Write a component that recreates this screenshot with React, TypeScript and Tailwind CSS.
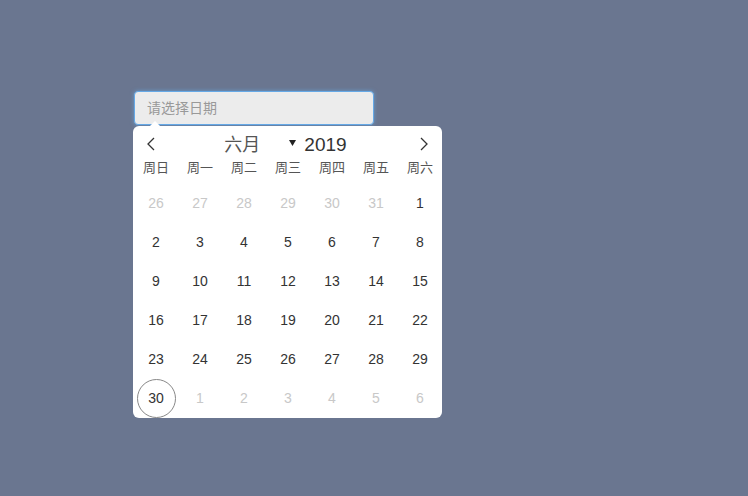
const weekdays = ["周日", "周一", "周二", "周三", "周四", "周五", "周六"];

type Day = { n: number; muted?: boolean; selected?: boolean };

const days: Day[] = [
  ...[26, 27, 28, 29, 30, 31].map((n) => ({ n, muted: true })),
  ...Array.from({ length: 29 }, (_, i) => ({ n: i + 1 })),
  { n: 30, selected: true },
  ...[1, 2, 3, 4, 5, 6].map((n) => ({ n, muted: true })),
];

function Chevron({ dir }: { dir: "left" | "right" }) {
  return (
    <svg width="10" height="16" viewBox="0 0 10 16" className="block">
      <polyline
        points={dir === "left" ? "8,2 2,8 8,14" : "2,2 8,8 2,14"}
        fill="none"
        stroke="#333"
        strokeWidth="1.3"
      />
    </svg>
  );
}

export default function App() {
  return (
    <div
      className="min-h-[496px] w-full bg-[#6a7690] pl-[133px] pt-[91px]"
      style={{ fontFamily: '"Liberation Sans", "Noto Sans CJK SC", sans-serif' }}
    >
      <div className="relative w-[310px]">
        <input
          readOnly
          placeholder="请选择日期"
          className="ml-[1px] block h-[34px] w-[240px] rounded-[4px] border border-[#66a9e6] bg-[#ececec] px-[12px] text-[14px] text-[#333] shadow-[0_0_4px_rgba(102,169,230,0.7)] outline-none placeholder:text-[#999]"
        />
        {/* arrow */}
        <div className="absolute left-[16px] top-[30px] h-0 w-0 border-x-[6px] border-b-[6px] border-x-transparent border-b-white" />

        <div className="mt-[1px] w-[309px] rounded-[6px] bg-white">
          <div className="flex h-[36px] items-center justify-between px-[13px]">
            <Chevron dir="left" />
            <div className="mr-[4px] mt-[3px] flex items-center text-[18px] text-[#333]">
              <span className="w-[37px] text-[#555]">六月</span>
              <svg width="7" height="6" viewBox="0 0 7 6" className="ml-[28px] mr-[8px] mb-[5px]">
                <polygon points="0,0 7,0 3.5,6" fill="#222" />
              </svg>
              <span className="text-[19px]">2019</span>
            </div>
            <Chevron dir="right" />
          </div>
          <div className="grid h-[22px] grid-cols-[repeat(7,44px)] pl-[1px] text-[13px] leading-[12px] text-[#555]">
            {weekdays.map((w) => (
              <div key={w} className="text-center">
                {w}
              </div>
            ))}
          </div>
          <div className="grid grid-cols-[repeat(7,44px)] pl-[1px]">
            {days.map((d, i) => (
              <div key={i} className="flex h-[39px] items-center justify-center">
                <span
                  className={
                    d.selected
                      ? "flex h-[39px] w-[39px] items-center justify-center rounded-full border border-[#888] text-[14px] text-[#333]"
                      : d.muted
                        ? "text-[14px] text-[#c8c8c8]"
                        : "text-[14px] text-[#333]"
                  }
                >
                  {d.n}
                </span>
              </div>
            ))}
          </div>
        </div>
      </div>
    </div>
  );
}
